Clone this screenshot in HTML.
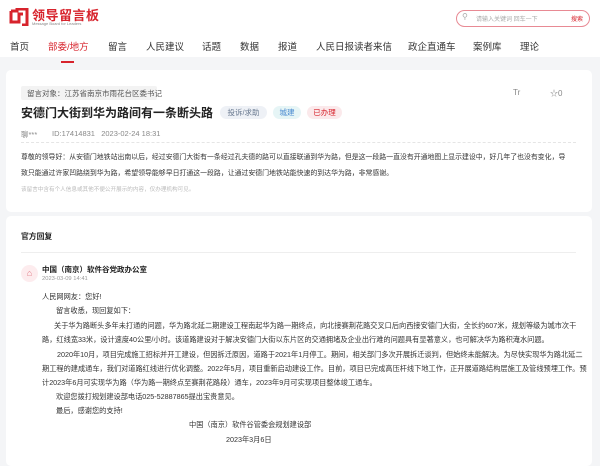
<!DOCTYPE html>
<html><head><meta charset="utf-8"><style>
*{margin:0;padding:0;box-sizing:border-box}
body{width:600px;height:458px;overflow:hidden;background:#f4f5f7;font-family:"Liberation Sans","Noto Sans CJK SC",sans-serif;color:#333;position:relative}
.a{position:absolute;white-space:nowrap}
.hdr{position:absolute;left:0;top:0;width:600px;height:57px;background:#fff}
.card{position:absolute;left:6px;width:586px;background:#fff;border-radius:5px}
.t{font-size:7.2px;line-height:10px;color:#333}
.c{font-size:6.9px;line-height:10px;color:#333}
.nav{font-size:9.5px;color:#333;top:39px}
.tag{font-size:7.5px;height:13px;line-height:13px;border-radius:7px;text-align:center}
</style></head><body>
<div class="hdr"></div>
<svg class="a" style="left:9px;top:8px" width="20" height="18" viewBox="0 0 20 18"><path d="M2 3 L8 3 L8 1 L18 1 L18 17 L13 17 M2 3 L2 14 L10 14 L10 6 L14 6" fill="none" stroke="#d7232c" stroke-width="3"/></svg>
<div class="a" style="left:32px;top:5px;font-size:13px;font-weight:bold;color:#d7232c;letter-spacing:0.5px">领导留言板</div>
<div class="a" style="left:32px;top:21px;font-size:4px;color:#888">Message Board for Leaders</div>
<div class="a" style="left:456px;top:10px;width:134px;height:17px;border:1px solid #e88a94;border-radius:9px"></div>
<div class="a" style="left:462px;top:12px;font-size:8px;color:#aaa">⚲</div>
<div class="a" style="left:476px;top:14px;font-size:6px;color:#aaa">请输入关键词 回车一下</div>
<div class="a" style="left:571px;top:14px;font-size:6px;color:#d7232c">搜索</div>
<div class="a nav" style="left:10px">首页</div>
<div class="a nav" style="left:48px;color:#d7232c">部委/地方</div>
<div class="a" style="left:61px;top:61px;width:13px;height:2px;background:#d7232c"></div>
<div class="a nav" style="left:108px">留言</div>
<div class="a nav" style="left:146px">人民建议</div>
<div class="a nav" style="left:202px">话题</div>
<div class="a nav" style="left:240px">数据</div>
<div class="a nav" style="left:278px">报道</div>
<div class="a nav" style="left:316px">人民日报读者来信</div>
<div class="a nav" style="left:408px">政企直通车</div>
<div class="a nav" style="left:473px">案例库</div>
<div class="a nav" style="left:520px">理论</div>

<div class="card" style="top:70px;height:142px"></div>
<div class="a" style="left:21px;top:86px;width:136px;height:14px;background:#f3f3f3;border-radius:2px"></div>
<div class="a" style="left:27px;top:88px;font-size:7.5px;color:#555">留言对象：江苏省南京市雨花台区委书记</div>
<div class="a" style="left:513px;top:88px;font-size:8px;color:#888">Tr</div>
<div class="a" style="left:550px;top:88px;font-size:8px;color:#888">☆0</div>
<div class="a" style="left:21px;top:104px;font-size:12px;font-weight:bold;color:#222">安德门大街到华为路间有一条断头路</div>
<div class="a tag" style="left:220px;top:106px;width:47px;background:#eef1f6;color:#6a7a90">投诉/求助</div>
<div class="a tag" style="left:273px;top:106px;width:28px;background:#e6f5f6;color:#4a8ad0">城建</div>
<div class="a tag" style="left:307px;top:106px;width:35px;background:#fbe9eb;color:#d7232c">已办理</div>
<div class="a" style="left:21px;top:129px;font-size:7.5px;color:#888">聊***</div>
<div class="a" style="left:52px;top:129px;font-size:7.5px;color:#888">ID:17414831&nbsp;&nbsp;&nbsp;2023-02-24 18:31</div>
<div class="a" style="left:21px;top:142px;width:555px;border-top:1px dashed #e5e5e5"></div>
<div class="a c" style="left:21px;top:153px">尊敬的领导好：从安德门地铁站出南以后，经过安德门大街有一条经过孔夫德的路可以直接联通到华为路，但是这一段路一直没有开通地图上显示建设中，好几年了也没有变化，导</div>
<div class="a c" style="left:21px;top:169px">致只能通过许家凹路绕到华为路，希望领导能够早日打通这一段路，让通过安德门地铁站能快速的到达华为路，非常感谢。</div>
<div class="a" style="left:21px;top:185px;font-size:5.6px;color:#bbb">该留言中含有个人信息或其他不便公开展示的内容，仅办理机构可见。</div>

<div class="card" style="top:216px;height:250px"></div>
<div class="a" style="left:21px;top:231px;font-size:7.8px;font-weight:bold;color:#222">官方回复</div>
<div class="a" style="left:21px;top:252px;width:555px;border-top:1px solid #eee"></div>
<div class="a" style="left:21px;top:265px;width:17px;height:17px;border-radius:50%;background:#fdecee;color:#e07a85;font-size:9px;text-align:center;line-height:17px">⌂</div>
<div class="a" style="left:42px;top:264px;font-size:7.5px;font-weight:bold;color:#222">中国（南京）软件谷党政办公室</div>
<div class="a" style="left:42px;top:276px;font-size:5.8px;color:#999">2023-03-09 14:41</div>
<div class="a t" style="left:42px;top:292px">人民网网友：您好!</div>
<div class="a t" style="left:56px;top:306px">留言收悉，现回复如下：</div>
<div class="a t" style="left:54px;top:321px">关于华为路断头多年未打通的问题，华为路北延二期建设工程南起华为路一期终点，向北接赛荆花路交叉口后向西接安德门大街，全长约607米，规划等级为城市次干</div>
<div class="a t" style="left:42px;top:335px">路，红线宽33米，设计速度40公里/小时。该道路建设对于解决安德门大街以东片区的交通拥堵及企业出行难的问题具有显著意义，也可解决华为路积淹水问题。</div>
<div class="a t" style="left:57px;top:350px">2020年10月，项目完成施工招标并开工建设，但因拆迁原因，道路于2021年1月停工。期间，相关部门多次开展拆迁谈判，但始终未能解决。为尽快实现华为路北延二</div>
<div class="a t" style="left:42px;top:364px">期工程的建成通车，我们对道路红线进行优化调整。2022年5月，项目重新启动建设工作。目前，项目已完成高压杆线下地工作，正开展道路结构层施工及管线预埋工作。预</div>
<div class="a t" style="left:42px;top:378px">计2023年6月可实现华为路（华为路一期终点至赛荆花路段）通车，2023年9月可实现项目整体竣工通车。</div>
<div class="a t" style="left:56px;top:392px">欢迎您拨打规划建设部电话025-52887865提出宝贵意见。</div>
<div class="a t" style="left:56px;top:406px">最后，感谢您的支持!</div>
<div class="a t" style="left:189px;top:420px">中国（南京）软件谷管委会规划建设部</div>
<div class="a t" style="left:226px;top:435px">2023年3月6日</div>
</body></html>
